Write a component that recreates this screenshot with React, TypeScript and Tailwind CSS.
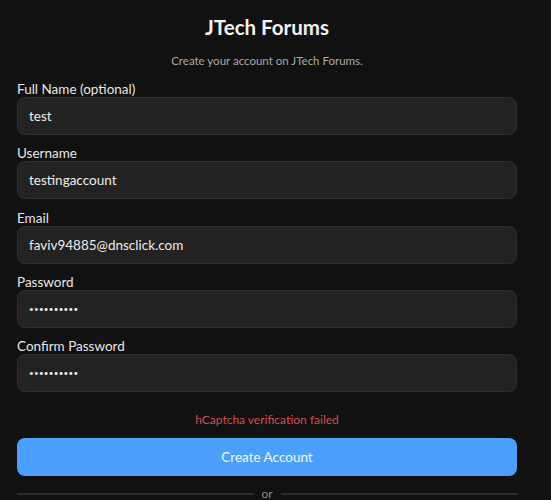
import React from "react";

function Field({ label, value, type = "text" }: { label: string; value: string; type?: string }) {
  const isPw = type === "password";
  return (
    <div className="flex flex-col">
      <label className="text-[13.5px] leading-4 text-[#e6e6e6]">{label}</label>
      <input
        type={type}
        defaultValue={value}
        className={
          isPw
            ? "h-[38px] w-full rounded-[8px] border border-[#2f2f2f] bg-[#222222] px-[11px] text-[8px] tracking-[0.3px] text-[#ececec] outline-none font-['Lato',sans-serif]"
            : "h-[38px] w-full rounded-[8px] border border-[#2f2f2f] bg-[#222222] px-[11px] text-[13.5px] text-[#ececec] outline-none font-['Lato',sans-serif]"
        }
      />
    </div>
  );
}

export default function App() {
  return (
    <div className="min-h-screen bg-[#111111] font-['Lato',sans-serif]">
      <div className="ml-[17px] flex w-[500px] flex-col pt-[13px]">
        <h1 className="text-center text-[20.5px] font-bold leading-[28px] text-[#f2f2f2]">JTech Forums</h1>
        <p className="mt-[12px] text-center text-[11.5px] leading-4 text-[#a8a8a8]">
          Create your account on JTech Forums.
        </p>
        <div className="mt-[12px] flex flex-col gap-[10.25px]">
          <Field label="Full Name (optional)" value="test" />
          <Field label="Username" value="testingaccount" />
          <Field label="Email" value="faviv94885@dnsclick.com" />
          <Field label="Password" value="testing123" type="password" />
          <Field label="Confirm Password" value="testing123" type="password" />
        </div>
        <p className="mt-[20px] text-center text-[12px] leading-4 text-[#dc4a4a]">hCaptcha verification failed</p>
        <button className="mt-[10px] h-[38px] w-full rounded-[8px] bg-[#4d9fff] text-[13.5px] text-[#f4f8ff]">
          Create Account
        </button>
        <div className="mt-[10px] flex items-center gap-[8px]">
          <div className="h-[2px] flex-1 bg-[#2a2a2a]" />
          <span className="text-[12px] leading-4 text-[#8a8a8a]">or</span>
          <div className="h-[2px] flex-1 bg-[#2a2a2a]" />
        </div>
      </div>
    </div>
  );
}
